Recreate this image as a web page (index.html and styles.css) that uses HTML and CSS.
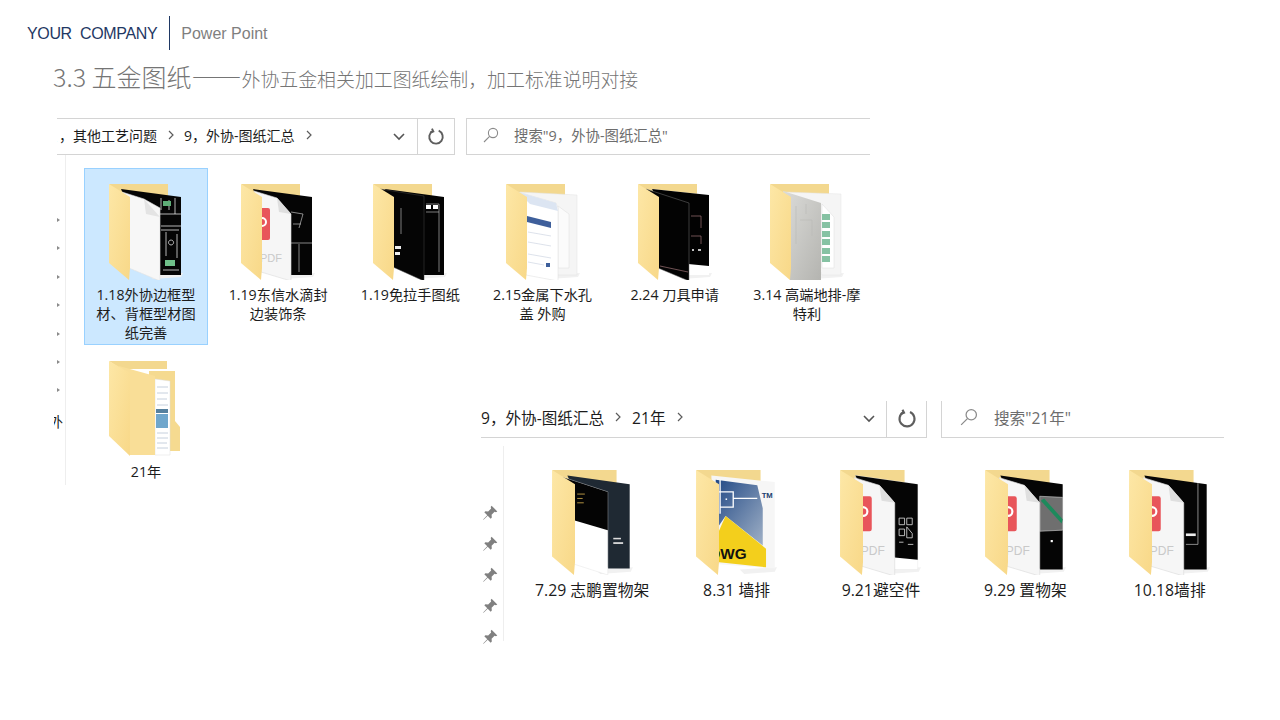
FILE: index.html
```html
<!DOCTYPE html>
<html lang="zh-CN">
<head>
  <meta charset="UTF-8" />
  <title>3.3 五金图纸</title>
  <link rel="stylesheet" href="styles.css">
</head>
<body>
  <svg class="defs" aria-hidden="true">
    <defs>
      <linearGradient id="flap" x1="0" y1="0" x2="1" y2="1">
        <stop offset="0" stop-color="#fde7a6"/>
        <stop offset="1" stop-color="#f8d888"/>
      </linearGradient>
      <linearGradient id="steel" x1="0" y1="0" x2="1" y2="1">
        <stop offset="0" stop-color="#dcdcd9"/>
        <stop offset="1" stop-color="#b4b4b0"/>
      </linearGradient>
      <linearGradient id="dwgblue" x1="0" y1="0" x2="1" y2="1">
        <stop offset="0" stop-color="#234a86"/>
        <stop offset="1" stop-color="#9fb0c6"/>
      </linearGradient>
      <g id="fold-back">
        <polygon points="40,91 74,89 72,93 44,95" fill="#f1f1f1"/>
        <polygon points="0,0 59,0 59,14 12,14" fill="#f3d88f"/>
      </g>
      <g id="fold-front">
        <polygon points="0,0 21,13 21,84 20,96 0,79" fill="url(#flap)"/>
      </g>
      <g id="pdf-page">
        <polygon points="13,7 36,14 50,30 50,97 20,88" fill="#f6f6f6" stroke="#dcdcdc" stroke-width=".6"/>
        <polygon points="36,14 38,28 50,30" fill="#dfdfdf"/>
        <rect x="19" y="24" width="10" height="32" rx="2" fill="#e8555a"/>
        <circle cx="21" cy="38" r="4" fill="none" stroke="#fff" stroke-width="2"/>
        <text class="pdf-mark" x="19" y="78">PDF</text>
      </g>
    </defs>
  </svg>

  <header class="brand">
    <span class="brand-name">YOUR&nbsp; COMPANY</span>
    <span class="brand-sub">Power Point</span>
  </header>
  <h1 class="title"><span class="title-big">3.3 五金图纸——</span>外协五金相关加工图纸绘制，加工标准说明对接</h1>

  <!-- first explorer capture -->
  <section class="win win-a">
    <div class="bar">
      <div class="address">
        <div class="crumbs">
          <span class="crumb-clip">、，</span>
          <span>其他工艺问题</span>
          <svg class="sep" viewBox="0 0 8 10"><polyline points="2,1 6,5 2,9"/></svg>
          <span>9，外协-图纸汇总</span>
          <svg class="sep" viewBox="0 0 8 10"><polyline points="2,1 6,5 2,9"/></svg>
        </div>
        <svg class="drop" viewBox="0 0 12 8"><polyline points="1,1 6,6 11,1"/></svg>
        <div class="refresh"><svg viewBox="0 0 16 16"><path d="M5.2 2.6A6 6 0 1 0 10.4 2.4"/><polyline points="4.4,0.6 5.6,3 3,4"/></svg></div>
      </div>
      <div class="search">
        <svg viewBox="0 0 16 16"><circle cx="10" cy="6" r="4.6"/><line x1="6.6" y1="9.4" x2="1" y2="15"/></svg>
        <span>搜索"9，外协-图纸汇总"</span>
      </div>
    </div>
    <div class="body">
      <div class="side side-a">
        <i class="tri"></i><i class="tri"></i><i class="tri"></i><i class="tri"></i><i class="tri"></i><i class="tri"></i><i class="tri"></i>
        <span class="side-clip">外</span>
      </div>
      <div class="grid grid-a">
        <div class="tile selected">
          <svg class="folder" viewBox="0 0 74 96">
            <use href="#fold-back"/>
            <polygon points="12,5 72,13 72,91 50,91" fill="#050505"/>
            <path d="M50 30H72M52 14L52 26M60 16V26M52 42H72M57 48V72M62 56a2.5 2.5 0 1 0 .1 0M54 86H70M66 14V30M52 46H70M68 50V74" stroke="#fff" stroke-width=".7" fill="none"/>
            <rect x="54" y="17" width="8" height="5" fill="#5fae78"/>
            <rect x="56" y="76" width="10" height="6" fill="#6fc08a"/>
            <polygon points="13,8 35,15 51,24 51,97 20,84" fill="#f7f7f7" stroke="#e2e2e2" stroke-width=".6"/>
            <polygon points="35,15 37,30 51,33" fill="#e4e4e4"/>
            <use href="#fold-front"/>
          </svg>
          <p class="name">1.18外协边框型材、背框型材图纸完善</p>
        </div>
        <div class="tile">
          <svg class="folder" viewBox="0 0 74 96">
            <use href="#fold-back"/>
            <polygon points="12,5 71,13 71,91 50,91" fill="#050505"/>
            <path d="M50 28L62 30L58 44M50 59H71M58 60V88M52 40H60" stroke="#ddd" stroke-width=".6" fill="none"/>
            <use href="#pdf-page"/>
            <use href="#fold-front"/>
          </svg>
          <p class="name">1.19东信水滴封边装饰条</p>
        </div>
        <div class="tile">
          <svg class="folder" viewBox="0 0 74 96">
            <use href="#fold-back"/>
            <polygon points="12,5 71,13 71,91 50,91" fill="#030303"/>
            <polygon points="7,5 51,12 51,97 20,83" fill="#050505" stroke="#444" stroke-width=".5"/>
            <path d="M53 20H66M66 20V88M28 24V50M53 28H66" stroke="#ccc" stroke-width=".6" fill="none"/>
            <rect x="53" y="21" width="5" height="4" fill="#fff"/>
            <rect x="60" y="21" width="5" height="4" fill="#fff"/>
            <rect x="22" y="62" width="6" height="3" fill="#eee"/>
            <rect x="22" y="68" width="5" height="3" fill="#eee"/>
            <use href="#fold-front"/>
          </svg>
          <p class="name">1.19免拉手图纸</p>
        </div>
        <div class="tile">
          <svg class="folder" viewBox="0 0 74 96">
            <use href="#fold-back"/>
            <polygon points="14,8 71,11 71,91 52,91" fill="#f5f5f5" stroke="#e2e2e2" stroke-width=".5"/>
            <polygon points="52,22 63,30 63,84 52,84" fill="#fbfbfb" stroke="#ddd" stroke-width=".5"/>
            <polygon points="12,8 50,19 52,24 52,97 20,91" fill="#fff" stroke="#ddd" stroke-width=".5"/>
            <polygon points="12,8 50,19 52,27 24,20" fill="#dce5f2"/>
            <polygon points="21,32 45,38 45,44 21,38" fill="#3e5f9b"/>
            <path d="M22 48L45 52M22 58L45 62M22 70L45 74M22 78L38 81" stroke="#cfd6e2" stroke-width=".7" fill="none"/>
            <rect x="40" y="79" width="4" height="4" fill="#3e5f9b"/>
            <use href="#fold-front"/>
          </svg>
          <p class="name">2.15金属下水孔盖 外购</p>
        </div>
        <div class="tile">
          <svg class="folder" viewBox="0 0 74 96">
            <use href="#fold-back"/>
            <polygon points="14,5 71,11 71,91 50,91" fill="#fff"/>
            <polygon points="14,5 71,11 71,82 50,80" fill="#020202"/>
            <polygon points="8,5 51,19 51,97 20,84" fill="#030303" stroke="#777" stroke-width=".5"/>
            <path d="M53 32H63V44M53 52H63V60M22 82L50 88" stroke="#b9878a" stroke-width=".6" fill="none"/>
            <path d="M54 66H56M60 66H63" stroke="#fff" stroke-width="1.4"/>
            <use href="#fold-front"/>
          </svg>
          <p class="name">2.24 刀具申请</p>
        </div>
        <div class="tile">
          <svg class="folder" viewBox="0 0 74 96">
            <use href="#fold-back"/>
            <polygon points="14,8 71,10 71,91 52,91" fill="#f5f5f5" stroke="#e4e4e4" stroke-width=".5"/>
            <polygon points="52,20 64,33 64,84 52,84" fill="#fff" stroke="#ddd" stroke-width=".5"/>
            <g fill="#86c2a3">
              <rect x="52" y="30" width="8" height="6"/>
              <rect x="52" y="38" width="8" height="6"/>
              <rect x="52" y="47" width="8" height="6"/>
              <rect x="52" y="55" width="8" height="6"/>
              <rect x="52" y="64" width="8" height="6"/>
              <rect x="52" y="72" width="8" height="6"/>
            </g>
            <polygon points="13,7 51,19 51,97 20,97" fill="url(#steel)"/>
            <path d="M26 22V60M30 36H42V52M36 20V30" stroke="#b9b9b6" stroke-width=".6" fill="none"/>
            <use href="#fold-front"/>
          </svg>
          <p class="name">3.14 高端地排-摩特利</p>
        </div>
        <div class="tile">
          <svg class="folder" viewBox="0 0 74 96">
            <polygon points="0,0 58,0 58,8 12,8" fill="#f3d88f"/>
            <polygon points="40,10 66,10 66,60 71,66 71,90 40,90" fill="#f5da90"/>
            <polygon points="46,18 61,20 61,94 46,94" fill="#fff" stroke="#ddd" stroke-width=".5"/>
            <path d="M48 26H59M48 32H59M48 38H58M48 44H59M48 72H59M48 77H59M48 82H58M48 87H59" stroke="#b8c4d4" stroke-width=".8"/>
            <rect x="47" y="48" width="12" height="4" fill="#55809f"/>
            <rect x="47" y="53" width="12" height="14" fill="#6fa6cc"/>
            <polygon points="10,5 46,15 46,94 21,94" fill="#f9de97"/>
            <polygon points="0,0 21,12 21,95 0,75" fill="url(#flap)"/>
          </svg>
          <p class="name">21年</p>
        </div>
      </div>
    </div>
  </section>

  <!-- second explorer capture, a little larger -->
  <section class="win win-b">
    <div class="bar">
      <div class="address">
        <div class="crumbs">
          <span>9，外协-图纸汇总</span>
          <svg class="sep" viewBox="0 0 8 10"><polyline points="2,1 6,5 2,9"/></svg>
          <span>21年</span>
          <svg class="sep" viewBox="0 0 8 10"><polyline points="2,1 6,5 2,9"/></svg>
        </div>
        <svg class="drop" viewBox="0 0 12 8"><polyline points="1,1 6,6 11,1"/></svg>
        <div class="refresh"><svg viewBox="0 0 16 16"><path d="M5.2 2.6A6 6 0 1 0 10.4 2.4"/><polyline points="4.4,0.6 5.6,3 3,4"/></svg></div>
      </div>
      <div class="search">
        <svg viewBox="0 0 16 16"><circle cx="10" cy="6" r="4.6"/><line x1="6.6" y1="9.4" x2="1" y2="15"/></svg>
        <span>搜索"21年"</span>
      </div>
    </div>
    <div class="body">
      <div class="side side-b">
        <svg class="pin" viewBox="0 0 14 14"><path d="M8.4 0.6L13.4 5.6L12.2 6.4L11 6L8.4 8.6L8.6 11L7.6 12L5 9.4L1.4 13L1 12.6L4.6 9L2 6.4L3 5.4L5.4 5.6L8 3L7.6 1.8Z"/></svg>
        <svg class="pin" viewBox="0 0 14 14"><path d="M8.4 0.6L13.4 5.6L12.2 6.4L11 6L8.4 8.6L8.6 11L7.6 12L5 9.4L1.4 13L1 12.6L4.6 9L2 6.4L3 5.4L5.4 5.6L8 3L7.6 1.8Z"/></svg>
        <svg class="pin" viewBox="0 0 14 14"><path d="M8.4 0.6L13.4 5.6L12.2 6.4L11 6L8.4 8.6L8.6 11L7.6 12L5 9.4L1.4 13L1 12.6L4.6 9L2 6.4L3 5.4L5.4 5.6L8 3L7.6 1.8Z"/></svg>
        <svg class="pin" viewBox="0 0 14 14"><path d="M8.4 0.6L13.4 5.6L12.2 6.4L11 6L8.4 8.6L8.6 11L7.6 12L5 9.4L1.4 13L1 12.6L4.6 9L2 6.4L3 5.4L5.4 5.6L8 3L7.6 1.8Z"/></svg>
        <svg class="pin" viewBox="0 0 14 14"><path d="M8.4 0.6L13.4 5.6L12.2 6.4L11 6L8.4 8.6L8.6 11L7.6 12L5 9.4L1.4 13L1 12.6L4.6 9L2 6.4L3 5.4L5.4 5.6L8 3L7.6 1.8Z"/></svg>
      </div>
      <div class="grid grid-b">
        <div class="tile">
          <svg class="folder" viewBox="0 0 74 96">
            <use href="#fold-back"/>
            <polygon points="14,5 71,13 71,90 51,90" fill="#1f2933"/>
            <rect x="56" y="62" width="7" height="1.4" fill="#ddd"/>
            <rect x="56" y="66" width="9" height="1.6" fill="#ddd"/>
            <polygon points="7,5.6 51,20 51,96 20,86" fill="#fff" stroke="#e2e2e2" stroke-width=".4"/>
            <polygon points="7,5.6 51,20 51,55 20,46" fill="#040404"/>
            <path d="M23 22H30M23 26H28M23 30H29" stroke="#c9a54a" stroke-width=".8"/>
            <use href="#fold-front"/>
          </svg>
          <p class="name">7.29 志鹏置物架</p>
        </div>
        <div class="tile">
          <svg class="folder" viewBox="0 0 74 96">
            <use href="#fold-back"/>
            <polygon points="14,5 72,11 72,90 18,86" fill="#f6f6f6"/>
            <polygon points="18,9 56,14 61,35 61,69 27,42 18,55" fill="url(#dwgblue)"/>
            <path d="M22 9V40M18 20H34V34H22M34 26H56" stroke="#fff" stroke-width="1.2" fill="none"/>
            <rect x="27" y="26" width="1.4" height="1.4" fill="#fff"/>
            <polygon points="19,60 27,42 64,72 64,89 19,84" fill="#f3cf1c"/>
            <text class="tm-mark" x="60" y="26">TM</text>
            <text class="dwg-mark" x="12" y="81">DWG</text>
            <use href="#fold-front"/>
          </svg>
          <p class="name">8.31 墙排</p>
        </div>
        <div class="tile">
          <svg class="folder" viewBox="0 0 74 96">
            <use href="#fold-back"/>
            <polygon points="14,5 71,13 71,91 50,91" fill="#fff" stroke="#e5e5e5" stroke-width=".4"/>
            <polygon points="14,5 71,13 71,82 50,80" fill="#050505"/>
            <path d="M54 44h5v6h-5zM61 44h5v6h-5zM54 54h5v6h-5zM61 52l5 6v4h-5zM54 66H58M62 68H67" stroke="#cfcfcf" stroke-width=".8" fill="none"/>
            <use href="#pdf-page"/>
            <use href="#fold-front"/>
          </svg>
          <p class="name">9.21避空件</p>
        </div>
        <div class="tile">
          <svg class="folder" viewBox="0 0 74 96">
            <use href="#fold-back"/>
            <polygon points="14,5 71,13 71,91 50,91" fill="#050505"/>
            <polygon points="50,24 71,25 71,55 50,56" fill="#6f6f6f" stroke="#ddd" stroke-width=".5"/>
            <polygon points="51,28 54,26 71,45 70,49" fill="#1d8a5c"/>
            <rect x="60" y="64" width="2" height="2" fill="#fff"/>
            <use href="#pdf-page"/>
            <use href="#fold-front"/>
          </svg>
          <p class="name">9.29 置物架</p>
        </div>
        <div class="tile">
          <svg class="folder" viewBox="0 0 74 96">
            <use href="#fold-back"/>
            <polygon points="14,5 71,13 71,91 50,91" fill="#050505"/>
            <path d="M63 12V68H52" stroke="#ccc" stroke-width=".6" fill="none"/>
            <rect x="52" y="58" width="9" height="2.4" fill="#eee"/>
            <use href="#pdf-page"/>
            <use href="#fold-front"/>
          </svg>
          <p class="name">10.18墙排</p>
        </div>
      </div>
    </div>
  </section>
</body>
</html>
```

FILE: styles.css
```css
body {
  margin: 0;
  width: 1280px;
  height: 720px;
  overflow: hidden;
  position: relative;
  background-color: #fff;
  font-family: "Liberation Sans", "Noto Sans CJK SC", sans-serif;
}
.defs {
  position: absolute;
  width: 0;
  height: 0;
}

.brand {
  display: flex;
  align-items: center;
  height: 34px;
  margin: 16px 0 0 27px;
  font-size: 16px;
}
.brand-name {
  color: #1f3864;
  letter-spacing: -0.35px;
  padding-right: 12px;
  border-right: 1px solid #1f3864;
  line-height: 36px;
  height: 34px;
}
.brand-sub {
  color: #7f7f7f;
  padding: 2px 0 0 11px;
}
.title {
  margin: 11px 0 0 53px;
  font-size: 18.9px;
  font-weight: 300;
  line-height: 30px;
  color: #757575;
  font-family: "Noto Sans CJK SC", sans-serif;
}
.title-big {
  font-size: 25px;
}

/* the two captures sit freely on the slide */
.win {
  position: absolute;
  font-family: "Open Sans", "Noto Sans CJK SC", sans-serif;
  color: #1c1c1c;
}
.win-a {
  left: 57px;
  top: 118px;
  width: 813px;
}
.win-b {
  left: 481px;
  top: 401px;
  width: 743px;
}

.bar {
  display: flex;
  height: 37px;
  box-sizing: border-box;
}
.address {
  display: flex;
  align-items: center;
  flex: none;
  overflow: hidden;
  border-bottom: 1px solid #d4d4d4;
}
.crumbs {
  display: flex;
  align-items: center;
  flex: 1;
  white-space: nowrap;
  padding-bottom: 4px;
}
.crumb-clip {
  margin-left: -5px;
}
.sep {
  width: 8px;
  height: 10px;
  fill: none;
  stroke: #5c5c5c;
  stroke-width: 1.2;
  margin: 0 10px;
}
.drop {
  width: 12px;
  height: 8px;
  fill: none;
  stroke: #555;
  stroke-width: 1.6;
  margin-right: 11px;
}
.refresh {
  display: flex;
  align-items: center;
  justify-content: center;
  height: 100%;
  border-left: 1px solid #d4d4d4;
  border-right: 1px solid #d4d4d4;
  box-sizing: border-box;
}
.refresh svg {
  width: 18px;
  height: 18px;
  fill: none;
  stroke: #5e5e5e;
  stroke-width: 1.7;
}
.search {
  display: flex;
  align-items: center;
  flex: 1;
  box-sizing: border-box;
  padding-bottom: 4px;
  color: #6d6d6d;
  border-bottom: 1px solid #d4d4d4;
  border-left: 1px solid #d4d4d4;
}
.search svg {
  flex: none;
  width: 16px;
  height: 16px;
  fill: none;
  stroke: #8a8a8a;
  stroke-width: 1.1;
}

.win-a .bar {
  font-size: 14px;
}
.win-a .address {
  width: 398px;
  border-top: 1px solid #d4d4d4;
  border-right: 1px solid #d4d4d4;
  box-sizing: border-box;
}
.win-a .sep {
  margin: 0 9px 0 10px;
}
.win-a .refresh {
  width: 37px;
  border-right: 0;
}
.win-a .drop {
  margin-right: 12px;
}
.win-a .search {
  margin-left: 11px;
  border-top: 1px solid #d4d4d4;
  padding-left: 16px;
}
.win-a .search span {
  margin-left: 15px;
  font-size: 14.4px;
}

.win-b .bar {
  font-size: 15.6px;
}
.win-b .address {
  width: 446px;
}
.win-b .refresh {
  width: 41px;
}
.win-b .refresh svg {
  width: 20px;
  height: 20px;
}
.win-b .search {
  margin-left: 14px;
  padding-left: 18px;
}
.win-b .search svg {
  width: 18px;
  height: 18px;
}
.win-b .search span {
  margin-left: 16px;
}

.body {
  display: flex;
}
.side {
  flex: none;
  box-sizing: border-box;
  border-right: 1px solid #eeeeee;
  display: flex;
  flex-direction: column;
}
.side-a {
  width: 12px;
  height: 330px;
  margin-left: -3px;
  padding: 63px 0 0 3px;
  gap: 24.4px;
  overflow: hidden;
  font-size: 14px;
}
.tri {
  flex: none;
  width: 0;
  height: 0;
  border-left: 3px solid #8a8a8a;
  border-top: 2px solid transparent;
  border-bottom: 2px solid transparent;
}
.side-clip {
  margin: -5px 0 0 -8px;
  line-height: 19px;
  color: #1c1c1c;
}
.side-b {
  width: 23px;
  height: 195px;
  margin-top: 8px;
  padding-top: 59px;
  gap: 15px;
}
.pin {
  flex: none;
  width: 16px;
  height: 16px;
  margin-left: 1px;
  fill: #808080;
}

.grid {
  display: grid;
  align-content: start;
  justify-items: stretch;
}
.grid-a {
  grid-template-columns: repeat(6, 124px);
  column-gap: 8.2px;
  margin: 13px 0 0 18px;
}
.grid-b {
  grid-template-columns: repeat(5, 144.4px);
  margin: 31px 0 0 16px;
}
.tile {
  display: flex;
  flex-direction: column;
  align-items: center;
  box-sizing: border-box;
  border: 1px solid transparent;
  text-align: center;
}
.tile.selected {
  background-color: #cce8ff;
  border-color: #99d1ff;
}
.grid-a .tile {
  padding: 15px 5px 2px;
}
.grid-a .folder {
  width: 74px;
  height: 96px;
}
.grid-b .folder {
  width: 81px;
  height: 105px;
}
.name {
  margin: 5px 0 0;
  font-size: 14.2px;
  line-height: 19px;
}
.grid-b .name {
  margin-top: 5px;
  font-size: 15.8px;
  line-height: 20px;
}

.pdf-mark {
  font-family: "Liberation Sans", sans-serif;
  font-size: 11px;
  fill: #c9c9c9;
}
.tm-mark {
  font-family: "Liberation Sans", sans-serif;
  font-size: 7px;
  font-weight: bold;
  fill: #22406f;
}
.dwg-mark {
  font-family: "Liberation Sans", sans-serif;
  font-size: 14px;
  font-weight: bold;
  fill: #111;
}
```
